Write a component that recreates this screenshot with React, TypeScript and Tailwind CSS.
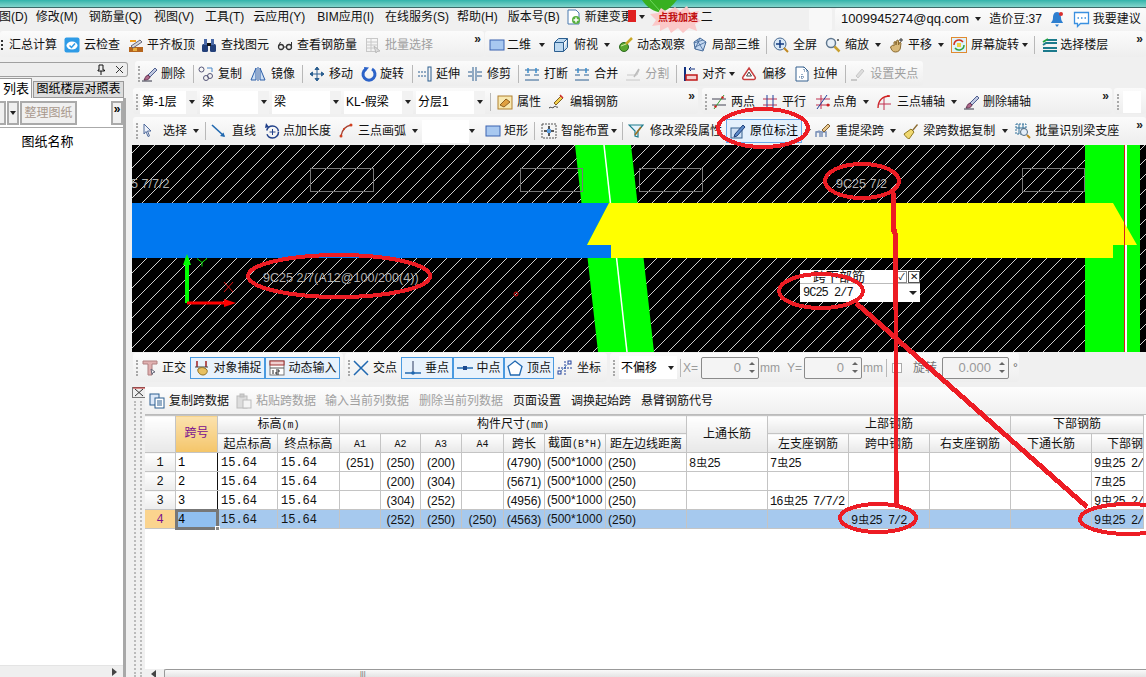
import React from "react";

const SANS = "[font-family:'Liberation_Sans','Noto_Sans_CJK_SC',sans-serif]";
const MONO = "[font-family:'Liberation_Mono','Noto_Sans_CJK_SC',monospace]";

const Ic = ({ children }: { children: React.ReactNode }) => (
  <svg width={16} height={16} viewBox="0 0 16 16" fill="none" className="shrink-0">{children}</svg>
);

const Icons: Record<string, React.ReactNode> = {
  cloud: <Ic><rect x="0.5" y="0.5" width="15" height="15" rx="2" fill="#2e9be6" /><ellipse cx="8" cy="8.5" rx="5.5" ry="4" fill="#fff" /><path d="M5.5 8.5l2 2 3.500-4" stroke="#2e9be6" strokeWidth="1.500" /></Ic>,
  level: <Ic><rect x="1" y="10" width="14" height="5" fill="#b5651d" /><rect x="5" y="11" width="4" height="3" fill="#e8b040" /><path d="M3 9l9-6 2 2-9 6z" fill="#d8d8d8" stroke="#667" /><path d="M2 4h6" stroke="#f0a020" strokeWidth="2" /></Ic>,
  binoc: <Ic><rect x="1" y="7" width="6" height="8" rx="1.500" fill="#23407a" /><rect x="9" y="7" width="6" height="8" rx="1.500" fill="#23407a" /><rect x="3" y="2" width="3" height="6" fill="#4a6aa8" /><rect x="10" y="2" width="3" height="6" fill="#4a6aa8" /><rect x="6" y="6" width="4" height="3" fill="#111" /></Ic>,
  glasses: <Ic><circle cx="4" cy="10" r="2.500" stroke="#333" strokeWidth="1.300" /><circle cx="12" cy="10" r="2.500" stroke="#333" strokeWidth="1.300" /><path d="M6.500 10h3M1.500 9l2-4M14.500 9V5" stroke="#333" /></Ic>,
  batch: <Ic><rect x="1.500" y="1.500" width="11" height="13" stroke="#c8c8c8" /><path d="M1.500 5h11M1.500 8h11M1.500 11h11M6 1.500v13" stroke="#c8c8c8" /><path d="M9 9l6 5-3 .5-1 1.500z" fill="#ddd" stroke="#bbb" /></Ic>,
  rect: <Ic><rect x="1" y="3" width="14" height="10" fill="#a8c8f0" stroke="#3a62b0" /></Ic>,
  cube: <Ic><path d="M1.500 5.500h9v9h-9zM1.500 5.500l4-4h9l-4 4M10.500 14.500l4-4v-9" fill="#bcd8f0" stroke="#2c5f90" /></Ic>,
  orbit: <Ic><circle cx="6" cy="10" r="4.500" fill="#5aa82e" stroke="#2c6a20" /><path d="M8 7l6-6" stroke="#c8a828" strokeWidth="2.500" /><path d="M3 9l5-2" stroke="#d4e8a0" /></Ic>,
  local3d: <Ic><path d="M2 5l6-4 6 4-3 9-8-2z" fill="#c4d8f0" stroke="#446a9a" /><path d="M5 3l6 10M8 1l-5 11M11 3l-9 3M14 5l-11 5" stroke="#446a9a" strokeWidth=".8" /></Ic>,
  full: <Ic><circle cx="7" cy="7" r="6" fill="#d8e8f6" stroke="#4a6a90" /><path d="M7 3v8M3 7h8" stroke="#123a80" strokeWidth="1.500" /><path d="M11 11l4 4" stroke="#c08820" strokeWidth="2" /></Ic>,
  zoom: <Ic><circle cx="6" cy="6" r="4.500" fill="#e8f0f8" stroke="#607890" strokeWidth="1.500" /><path d="M9.500 9.500l5 5" stroke="#c8a030" strokeWidth="2.500" /><circle cx="13" cy="3" r="1" fill="#444" /></Ic>,
  pan: <Ic><path d="M2 10c1-3 3-1 3-1V5l1.500-.5L7 8l1-5 1.500.5V8l1.500-3 1 1-.5 4c0 3-2 5-5 5-3 0-4-2-5-5z" fill="#d8b878" stroke="#8a6a30" /><path d="M12 1v4M10 3h4" stroke="#333" /></Ic>,
  rotate: <Ic><rect x="0.500" y="0.500" width="15" height="15" fill="#dff2fa" stroke="#e08a30" /><path d="M3 8a5 5 0 0 1 9-3" stroke="#d03020" strokeWidth="1.500" /><path d="M13 8a5 5 0 0 1-9 3" stroke="#30a040" strokeWidth="1.500" /><rect x="6" y="6" width="4" height="4" fill="#f0d040" /></Ic>,
  floors: <Ic><path d="M5 3h10M1 8l3-2h11M1 11h14M1 14h14" stroke="#1c7a8c" strokeWidth="2" /><path d="M1 5l5-3" stroke="#20a040" strokeWidth="2" /></Ic>,
  brush: <Ic><path d="M6 9l7-7 2 2-7 7z" fill="#c0c8e0" stroke="#506090" /><path d="M6 9l2 2c-1 3-4 3-6 3 1-1 1-4 4-5z" fill="#b06a8a" stroke="#603050" /><path d="M0 15h10" stroke="#334" /></Ic>,
  copy: <Ic><circle cx="3.500" cy="3.500" r="2.500" stroke="#557" /><circle cx="8" cy="12" r="2.500" stroke="#557" /><circle cx="12" cy="10" r="2.500" stroke="#557" /><path d="M9 2l5 0 0 4" stroke="#4a88c8" /></Ic>,
  mirror: <Ic><path d="M1 14L6 2v12zM15 14L10 2v12z" fill="#cfe0f4" stroke="#2c5ea8" /><path d="M8 1v14" stroke="#2c5ea8" /></Ic>,
  move: <Ic><path d="M8 1v14M1 8h14M8 1L6 3.500h4zM8 15l-2-2.500h4zM1 8l2.500-2v4zM15 8l-2.500-2v4z" stroke="#2c5f90" fill="#2c5f90" /></Ic>,
  spin: <Ic><path d="M11 3a6 6 0 1 1-6 0" stroke="#2b62c8" strokeWidth="3" /><path d="M3 1l5 .5L4 6z" fill="#2b62c8" /></Ic>,
  extend: <Ic><path d="M0 6h8M0 10h8" stroke="#2c5f90" strokeDasharray="2 1" /><rect x="10" y="1" width="3" height="14" stroke="#2c5f90" /></Ic>,
  trim: <Ic><path d="M1 6h4M1 10h4M10 6h5M10 10h5" stroke="#2c5f90" /><path d="M6 1v14M9 1v14" stroke="#2c5f90" /></Ic>,
  breakI: <Ic><path d="M1 4h14M1 14h14M1 9h5M10 9h5" stroke="#2c5f90" /><path d="M4 2v5M12 2v5" stroke="#3a8fd0" strokeWidth="1.500" /></Ic>,
  split: <Ic><path d="M1 14h14M2 9h10l2-5" stroke="#c8c8c8" /><path d="M9 11l5-8" stroke="#bbb" strokeWidth="1.500" /></Ic>,
  align: <Ic><path d="M2 1v14" stroke="#103080" strokeWidth="2" /><path d="M6 3h6M6 3l2-2M6 3l2 2" stroke="#103080" /><rect x="3" y="9" width="11" height="5" fill="#f4d0d0" stroke="#c01818" strokeWidth="1.500" /></Ic>,
  offset: <Ic><path d="M8 2l6 9a1.500 1.500 0 0 1-1 2.500H3A1.500 1.500 0 0 1 2 11z" stroke="#c84040" strokeWidth="1.500" fill="#fff" /><path d="M8 6l2.500 4h-5z" stroke="#444" /></Ic>,
  stretch: <Ic><path d="M2 1h8l4 4v10H2z" fill="#fff" stroke="#35608f" /><path d="M10 1v4h4M8 8v5M5 11h6" stroke="#35608f" strokeDasharray="1 1" /></Ic>,
  grip: <Ic><path d="M1 14h6" stroke="#c8c8c8" strokeWidth="2" /><path d="M6 10l6-7 2 2-6 7z" fill="#ddd" stroke="#c8c8c8" /></Ic>,
  prop: <Ic><rect x="1" y="2" width="14" height="13" fill="#f8e8b0" stroke="#b08030" /><path d="M3 11l6-6 4 3-6 5z" fill="#e0a040" stroke="#906020" /></Ic>,
  pencil: <Ic><path d="M5 9l7-7 2 2-7 7z" fill="#f2d050" stroke="#806020" /><path d="M0 14c2-2 3 1 5-1s2 1 4 0" stroke="#333" /><path d="M11 1l3 3" stroke="#d03030" strokeWidth="1.500" /></Ic>,
  twop: <Ic><path d="M1 5h14M1 11h14" stroke="#445" /><path d="M3 15L13 1" stroke="#30a030" /><circle cx="4.500" cy="12.500" r="1.200" fill="#d02020" /><circle cx="11.500" cy="3.500" r="1.200" fill="#d02020" /></Ic>,
  para: <Ic><path d="M1 5h14M1 11h14" stroke="#c03050" /><path d="M5 1v14M11 1v14" stroke="#20409a" /></Ic>,
  angle: <Ic><path d="M1 5h14M1 11h14M6 1v14" stroke="#c03050" /><path d="M2 15L12 1" stroke="#20409a" /><circle cx="13" cy="11" r="1.500" fill="#d02020" /></Ic>,
  arcAxis: <Ic><path d="M2 14C2 6 7 2 14 2" stroke="#d02020" strokeWidth="1.300" /><path d="M8 4v12M2 10h13" stroke="#c03050" /><circle cx="12" cy="2" r="1" fill="#d02020" /></Ic>,
  arrow: <Ic><path d="M4 1l7 7H7.500l2 5-1.500.5-2-5L4 11z" fill="#eef2fa" stroke="#506a9a" /></Ic>,
  line: <Ic><path d="M1 2l12 11" stroke="#2068b0" strokeWidth="1.600" /><path d="M14 14l-5-1 3.500-3.500z" fill="#2068b0" /></Ic>,
  ptLen: <Ic><circle cx="8.500" cy="9" r="6" stroke="#20408a" strokeWidth="1.500" strokeDasharray="16 4" /><path d="M8.500 6v6M5.500 9h6" stroke="#20408a" /><path d="M2 0l3 4-4 1z" fill="#20408a" /></Ic>,
  arc: <Ic><path d="M3 13C4 7 8 3 13 2" stroke="#a84030" strokeWidth="1.300" /><circle cx="3" cy="13" r="1.500" fill="#d04020" /><circle cx="13" cy="2" r="1.500" fill="#d04020" /><circle cx="6" cy="6" r="1" fill="#d04020" /></Ic>,
  smart: <Ic><rect x="1" y="1" width="14" height="14" fill="#f4f4f4" stroke="#555" strokeDasharray="2 1" /><path d="M8 3v10M3 8h10" stroke="#222" strokeWidth="1.500" /><rect x="6" y="6" width="4" height="4" fill="#60a0e0" /></Ic>,
  funnel: <Ic><path d="M1 2h14l-5 6v6l-3-1V8z" fill="#e6f2fb" stroke="#1c7a8c" strokeWidth="1.200" /><path d="M7 12l6-8" stroke="#a07020" strokeWidth="1.500" /></Ic>,
  yuan: <Ic><rect x="1" y="5" width="11" height="10" fill="#cfe0f4" stroke="#35608f" /><path d="M5 11l8-9 2 2-8 9-3 1z" fill="#5a88c8" stroke="#20407a" /></Ic>,
  respan: <Ic><path d="M1 14v-5h4v5M7 14v-5h4v5" stroke="#7a90b8" strokeWidth="1.500" /><path d="M7 7l6-6 2 2-6 6z" fill="#e8c890" stroke="#806030" /><path d="M1 9a5 5 0 0 1 6 0" stroke="#7a90b8" /></Ic>,
  broom: <Ic><path d="M9 7l5-6 1 1-5 6z" fill="#8a6a30" /><path d="M1 11l7-5 3 3-5 7c-2-1-4-3-5-5z" fill="#f0d870" stroke="#907820" /></Ic>,
  batchBeam: <Ic><rect x="1" y="1" width="10" height="10" stroke="#30709a" strokeDasharray="2 1" /><path d="M4 1v10M8 1v10M1 5h10" stroke="#30709a" /><circle cx="9" cy="9" r="3.500" fill="#e4eef8" stroke="#506a80" /><path d="M12 12l3 3" stroke="#c08820" strokeWidth="2" /></Ic>,
  ortho: <Ic><path d="M1 1h14v3h-5v11H6V4H1z" fill="#e0b0b0" stroke="#b08080" /><path d="M9 9l4 3-2 .5-1 2z" fill="#fff" stroke="#667" /></Ic>,
  snap: <Ic><path d="M3 1v6M12 1v6" stroke="#a02020" strokeWidth="1.500" /><path d="M1 7h13" stroke="#444" /><path d="M4 9c2-2 7-2 9 1 1 2-1 5-4 5-3 0-6-3-5-6z" fill="#e8c060" stroke="#907020" /></Ic>,
  dyn: <Ic><rect x="1" y="1" width="14" height="14" fill="#fff" stroke="#777" /><rect x="1" y="1" width="14" height="4" fill="#f0d0d0" stroke="#a03030" /><path d="M1 8h14" stroke="#555" /><path d="M4 10v4M7 10h3v2H7v2h3" stroke="#222" /></Ic>,
  cross: <Ic><path d="M1 1l14 14M15 1L1 15" stroke="#2068b0" strokeWidth="1.500" /></Ic>,
  perp: <Ic><path d="M0 13h16" stroke="#2068b0" strokeWidth="1.500" /><path d="M8 1v12" stroke="#2c3a60" /><circle cx="8" cy="13" r="1.800" fill="#2068b0" /></Ic>,
  mid: <Ic><path d="M0 8h16" stroke="#2068b0" strokeWidth="1.500" /><rect x="6" y="6" width="4" height="4" fill="#1c4a90" /></Ic>,
  vertex: <Ic><path d="M8 1l7 5.500L12.500 15h-9L1 6.500z" fill="#fff" stroke="#2068b0" strokeWidth="1.300" /></Ic>,
  coord: <Ic><path d="M8 1v14M1 8h14" stroke="#20409a" strokeDasharray="2 1" /><path d="M1 14L14 1" stroke="#2068b0" strokeDasharray="1 1" /><rect x="11" y="1" width="3" height="3" fill="#fff" stroke="#20409a" /><rect x="1" y="11" width="3" height="3" fill="#fff" stroke="#20409a" /></Ic>,
  copySpan: <Ic><rect x="1" y="1" width="9" height="11" fill="#dce8f8" stroke="#2c5f90" /><rect x="6" y="5" width="9" height="10" fill="#fff" stroke="#2c5f90" /><path d="M8 8h5M8 10h5M8 12h5" stroke="#2c5f90" /></Ic>,
  paste: <Ic><rect x="1" y="3" width="10" height="12" fill="#ddd" stroke="#bbb" /><rect x="4" y="1" width="4" height="3" fill="#ccc" stroke="#bbb" /><rect x="7" y="7" width="8" height="8" fill="#f4f4f4" stroke="#bbb" /></Ic>,
  doc: <Ic><path d="M2 1h8l3 3v11H2z" fill="#fff" stroke="#4a7ab0" /><circle cx="10" cy="11" r="4" fill="#58b040" /><path d="M10 8.500v5M7.500 11h5" stroke="#fff" strokeWidth="1.500" /></Ic>,
};

const Caret = ({ m = "ml-[6px]", gray = false }: { m?: string; gray?: boolean }) => (
  <span className={`${m} w-0 h-0 shrink-0 border-x-[3px] border-x-transparent border-t-[4px] ${gray ? "border-t-[#999]" : "border-t-[#222]"}`} />
);
const Sep = ({ m = "ml-[6px]" }: { m?: string }) => <span className={`${m} w-px h-[18px] shrink-0 bg-[#b8b8b8]`} />;
const Grip = ({ m = "ml-[3px]" }: { m?: string }) => <span className={`${m} h-[16px] shrink-0 border-l-2 border-dotted border-[#a8a8a8]`} />;
const More = () => <span className="ml-auto mr-[3px] self-start text-[12px] leading-[12px] font-bold text-[#222]">»</span>;

function Item({ icon, text, m = "ml-[8px]", gray = false, gap = "gap-[4px]" }: { icon?: string; text: string; m?: string; gray?: boolean; gap?: string }) {
  return (
    <span className={`${m} ${gap} flex items-center shrink-0 whitespace-nowrap ${gray ? "text-[#a0a0a0]" : "text-[#111]"}`}>
      {icon && Icons[icon]}
      <span>{text}</span>
    </span>
  );
}

function Sel({ text, w = "w-[57px]", m = "ml-[3px]" }: { text: string; w?: string; m?: string }) {
  return (
    <span className={`${m} ${w} h-[23px] bg-white flex items-center shrink-0 pl-[2px] overflow-hidden`}>
      <span className="flex-1 whitespace-nowrap">{text}</span>
      <span className="w-[11px] h-full bg-[#f2f2f2] flex items-center justify-center"><Caret m="" /></span>
    </span>
  );
}

const panel = "h-full flex items-center rounded-[3px] bg-gradient-to-b from-[#fbfbfb] to-[#eeeeee]";

const Hot = ({ icon, text, w, m = "ml-[1px]" }: { icon: string; text: string; w: string; m?: string }) => (
  <span className={`${m} ${w} h-[22px] shrink-0 flex items-center justify-center gap-[4px] border border-[#4a9ae0] bg-[#e8f2fc] text-[#111] whitespace-nowrap`}>
    {Icons[icon]}<span>{text}</span>
  </span>
);

const Spin = ({ v, w = "w-[58px]", m = "ml-[3px]" }: { v: string; w?: string; m?: string }) => (
  <span className={`${m} ${w} h-[22px] shrink-0 flex items-center justify-end border border-[#8a8a8a] rounded-[2px] bg-[#f4f4f4] text-[#999] text-[13px] pr-[2px]`}>
    <span className="mr-[6px]">{v}</span>
    <span className="flex flex-col gap-[5px] w-[9px] items-center">
      <span className="w-0 h-0 border-x-[3px] border-x-transparent border-b-[3px] border-b-[#666]" />
      <span className="w-0 h-0 border-x-[3px] border-x-transparent border-t-[3px] border-t-[#666]" />
    </span>
  </span>
);

const menus = [
  ["图(D)", "-ml-[1px]"], ["修改(M)", "ml-[8px]"], ["钢筋量(Q)", "ml-[11px]"], ["视图(V)", "ml-[12px]"], ["工具(T)", "ml-[11px]"],
  ["云应用(Y)", "ml-[9px]"], ["BIM应用(I)", "ml-[12px]"], ["在线服务(S)", "ml-[11px]"], ["帮助(H)", "ml-[8px]"], ["版本号(B)", "ml-[10px]"],
];

const cw = ["w-[31px]", "w-[42px]", "w-[60px]", "w-[62px]", "w-[41px]", "w-[40px]", "w-[41px]", "w-[42px]", "w-[41px]", "w-[61px]", "w-[81px]", "w-[81px]", "w-[81px]", "w-[81px]", "w-[81px]", "w-[81px]", "w-[52px]"];

const rows = [
  ["1", "15.64", "15.64", "(251)", "(250)", "(200)", "", "(4790)", "(500*1000)", "(250)", "8虫25", "7虫25", "", "", "", "9虫25 2/7"],
  ["2", "15.64", "15.64", "", "(200)", "(304)", "", "(5671)", "(500*1000)", "(250)", "", "", "", "", "", "7虫25"],
  ["3", "15.64", "15.64", "", "(304)", "(252)", "", "(4956)", "(500*1000)", "(250)", "", "16虫25 7/7/2", "", "", "", "9虫25 2/7"],
  ["4", "15.64", "15.64", "", "(252)", "(250)", "(250)", "(4563)", "(500*1000)", "(250)", "", "", "9虫25 7/2", "", "", "9虫25 2/7"],
];

const Rebar = ({ s }: { s: string }) => {
  const [a, b] = s.split("虫");
  return <span className={`${MONO} tracking-[-1px]`}>{a}<span className="mx-[1px] text-[11px]">虫</span>{b}</span>;
};

const hd = "border border-[#c4c4c4] bg-gradient-to-b from-[#ffffff] to-[#e8e8e8] text-center font-normal text-[#111] p-0 leading-[15px] overflow-hidden whitespace-nowrap";
const hd2 = `${hd} pt-[2px]`;
const small = `${MONO} text-[10px]`;

function Table() {
  return (
    <table className="-ml-[1px] w-[999px] table-fixed border-collapse text-[12px] bg-white">
      <colgroup>{cw.map((c, i) => <col key={i} className={c} />)}</colgroup>
      <thead>
        <tr className="h-[18px]">
          <th rowSpan={2} className={hd} />
          <th rowSpan={2} className="border border-[#c4c4c4] bg-gradient-to-b from-[#fbe2ae] to-[#f4c568] text-[#7a1090] font-normal p-0 pb-[2px]">跨号</th>
          <th colSpan={2} className={hd}>标高<span className={small}>(m)</span></th>
          <th colSpan={7} className={hd}>构件尺寸<span className={small}>(mm)</span></th>
          <th rowSpan={2} className={hd}>上通长筋</th>
          <th colSpan={3} className={hd}>上部钢筋</th>
          <th colSpan={2} className={hd}>下部钢筋</th>
        </tr>
        <tr className="h-[19px]">
          <th className={hd2}>起点标高</th>
          <th className={hd2}>终点标高</th>
          {["A1", "A2", "A3", "A4"].map((a) => <th key={a} className={`${hd2} ${small}`}>{a}</th>)}
          <th className={hd2}>跨长</th>
          <th className={hd2}>截面<span className={small}>(B*H)</span></th>
          <th className={hd2}>距左边线距离</th>
          <th className={hd2}>左支座钢筋</th>
          <th className={hd2}>跨中钢筋</th>
          <th className={hd2}>右支座钢筋</th>
          <th className={hd2}>下通长筋</th>
          <th className={`${hd2} text-left pl-[15px]`}>下部钢筋</th>
        </tr>
      </thead>
      <tbody>
        {rows.map((r, i) => {
          const sel = i === 3;
          const td = `border border-[#c4c4c4] px-[2px] pt-[3px] pb-0 h-[19px] leading-[13px] overflow-hidden whitespace-nowrap text-[#111] ${sel ? "bg-[#a6c9ee]" : "bg-white"}`;
          return (
            <tr key={i} className="h-[19px]">
              <td className={`border border-[#c4c4c4] p-0 pt-[3px] text-center leading-[13px] ${MONO} ${sel ? "bg-[#fbd48e] text-[#7a1090]" : "bg-gradient-to-b from-[#ffffff] to-[#ececec] text-[#111]"}`}>{i + 1}</td>
              <td className={`${MONO} p-0 pl-[2px] pt-[3px] leading-[13px] ${sel ? "relative bg-[#90bff0] outline-[3px] -outline-offset-2 outline-[#777777] border border-[#777]" : "border border-[#c4c4c4] border-r-[#111] bg-white"}`}>
                {r[0]}
                {sel && <span className="absolute -right-[3px] -bottom-[3px] w-[5px] h-[5px] bg-[#888] border border-white" />}
              </td>
              <td className={`${td} ${MONO} pl-[3px]`}>{r[1]}</td>
              <td className={`${td} ${MONO} pl-[3px]`}>{r[2]}</td>
              {r.slice(3, 8).map((c, j) => <td key={j} className={`${td} ${j < 4 ? "text-center" : "text-center px-0"}`}>{c}</td>)}
              <td className={`${td} pt-[1px] pb-[2px]`}>{r[8].replace(")", "")}</td>
              <td className={td}>{r[9]}</td>
              {r.slice(10, 15).map((c, j) => <td key={j} className={td}>{c && <Rebar s={c} />}</td>)}
              <td className={td}><Rebar s={r[15]} /></td>
            </tr>
          );
        })}
      </tbody>
    </table>
  );
}

function Canvas() {
  const gray = "#b0b0b0";
  return (
    <div className="relative h-[207px] bg-black overflow-hidden">
      <svg width={1014} height={207} viewBox="132 145 1014 207" className="block">
        <defs>
          <pattern id="hatch" width="15" height="15" patternUnits="userSpaceOnUse">
            <path d="M0 15L15 0" stroke="#d0d0d0" strokeWidth="1" />
          </pattern>
        </defs>
        <rect x="132" y="145" width="1014" height="207" fill="url(#hatch)" />
        <polygon points="575,145 631,145 654,352 598,352" fill="#00ff00" />
        <path d="M604 145L627 352" stroke="#fff" strokeWidth="1.500" />
        <rect x="1085" y="145" width="55" height="207" fill="#00ff00" />
        <rect x="1124" y="145" width="1" height="207" fill="#d02020" />
        <rect x="1125" y="145" width="2" height="207" fill="#fff" />
        {[[310, 63], [520, 62], [639, 63], [1022, 62]].map(([x, w]) => (
          <rect key={x} x={x + 0.5} y="168.500" width={w} height="23" fill="none" stroke="#777" />
        ))}
        <polygon points="132,203 609,203 587,245 611,245 611,258 132,258" fill="#0078f0" />
        <polygon points="609,203 1113,203 1137,245 1113,245 1113,258 611,258 611,245 587,245" fill="#ffff00" />
        <rect x="1124" y="203" width="1" height="42" fill="#d02020" />
        <text x="131" y="188" fontSize="12.600" fill={gray} fontFamily="Liberation Sans">5 7/7/2</text>
        <text x="836" y="188" fontSize="12.600" fill={gray} fontFamily="Liberation Sans">9C25 7/2</text>
        <text x="263" y="282" fontSize="12.600" fill={gray} fontFamily="Liberation Sans">9C25 2/7(A12@100/200(4))</text>
        <path d="M187 303V258" stroke="#00ff00" strokeWidth="4" />
        <polygon points="187,254 183,265 191,265" fill="#00ff00" />
        <path d="M187 303H228" stroke="#ff0000" strokeWidth="3" />
        <polygon points="236,303 224,299 224,307" fill="#ff0000" />
        <path d="M197 258.500l5 4 5-4M202 262.500v4" stroke="#00e000" />
        <path d="M224 282l9 10M233 282l-9 10" stroke="#e01010" />
        <circle cx="516" cy="294" r="2" fill="none" stroke="#e01010" />
      </svg>
      <div className="absolute left-[668px] top-[125px] w-[120px] h-[32px] bg-white text-[#111]">
        <div className="h-[14px] flex items-center border-b border-[#bbb]">
          <span className="ml-[13px] flex-1 text-[13px] leading-[14px] whitespace-nowrap">跨下部筋</span>
          <span className="w-[11px] h-[12px] border border-[#888] text-[9px] leading-[10px] text-center">✓</span>
          <span className="ml-[1px] w-[12px] h-[12px] border border-[#555] text-[10px] leading-[10px] text-center">✕</span>
        </div>
        <div className="h-[18px] flex items-center pl-[3px]">
          <span className={`${MONO} flex-1 text-[12px] tracking-[-1px] whitespace-pre`}>9C25 2/7</span>
          <span className="mr-[3px] w-0 h-0 border-x-[4px] border-x-transparent border-t-[4px] border-t-[#222]" />
        </div>
      </div>
    </div>
  );
}

export default function App() {
  return (
    <div className={`relative w-[1146px] h-[677px] overflow-hidden bg-[#f0f0f0] text-[12px] ${SANS} flex flex-col`}>
      {/* title strip */}
      <div className="h-[8px] shrink-0 bg-gradient-to-b from-[#2fb3aa] to-[#7fd6cc] border-b border-[#3a6a68]" />
      {/* menu */}
      <div className="h-[23px] shrink-0 flex items-center pb-[6px] text-[#111] relative">
        {menus.map(([t, m]) => <span key={t} className={`${m} whitespace-nowrap`}>{t}</span>)}
        <span className="ml-[6px] flex items-center gap-[3px]">{Icons.doc}<span>新建变更</span></span>
        <Caret m="ml-[6px]" />
        <span className="ml-[56px]">二</span>
        <div className="ml-auto flex items-center h-[23px] mt-[6px]">
          <span className="w-[23px] h-full bg-[#f8f8f8] rounded-[3px]" />
          <span className="ml-[3px] w-[311px] h-full bg-gradient-to-b from-[#fbfbfb] to-[#f2f2f2] rounded-[3px] flex items-center pl-[6px] pb-[1px] whitespace-nowrap">
            <span className="text-[13px]">1009945274@qq.com</span>
            <Caret m="ml-[6px]" />
            <span className="ml-[8px] text-[12px]">造价豆:37</span>
            <svg width={14} height={17} viewBox="0 0 14 17" className="ml-[8px]"><path d="M7 1c-3 0-4 3-4 6 0 3-2 4-2 5h12c0-1-2-2-2-5 0-3-1-6-4-6z" fill="#2e7fd0" /><path d="M5 13.500h4L7 16z" fill="#2e7fd0" /><circle cx="11" cy="3" r="2" fill="#d83030" /></svg>
            <svg width={17} height={17} viewBox="0 0 17 17" className="ml-[9px]"><path d="M1.500 1.500h14v11h-8l-3 3v-3h-3z" fill="#fff" stroke="#3a90e0" strokeWidth="1.300" /><path d="M4.500 7h1.500M8 7h1.500M11.500 7H13" stroke="#3a90e0" strokeWidth="1.300" /></svg>
            <span className="ml-[3px]">我要建议</span>
          </span>
        </div>
      </div>
      {/* toolbar 1 */}
      <div className="h-[26px] shrink-0 flex">
        <div className={`${panel} w-[484px] pt-[2px]`}>
          <span className="ml-[1px] w-[3px] h-[10px] border-l-2 border-dotted border-[#333]" />
          <Item text="汇总计算" m="ml-[5px]" />
          <Item icon="cloud" text="云检查" m="ml-[7px]" />
          <Item icon="level" text="平齐板顶" m="ml-[8px]" gap="gap-[3px]" />
          <Item icon="binoc" text="查找图元" m="ml-[6px]" />
          <Item icon="glasses" text="查看钢筋量" m="ml-[8px]" />
          <Item icon="batch" text="批量选择" m="ml-[8px]" gray />
          <More />
        </div>
        <div className={`${panel} ml-[1px] w-[661px] pt-[2px]`}>
          <Item icon="rect" text="二维" m="ml-[4px]" gap="gap-[2px]" />
          <Caret m="ml-[8px]" />
          <Item icon="cube" text="俯视" m="ml-[8px]" gap="gap-[5px]" />
          <Caret />
          <Item icon="orbit" text="动态观察" m="ml-[8px]" gap="gap-[3px]" />
          <Item icon="local3d" text="局部三维" m="ml-[7px]" />
          <Sep />
          <Item icon="full" text="全屏" m="ml-[6px]" />
          <Item icon="zoom" text="缩放" m="ml-[8px]" />
          <Caret />
          <Item icon="pan" text="平移" m="ml-[8px]" gap="gap-[3px]" />
          <Caret />
          <Item icon="rotate" text="屏幕旋转" m="ml-[7px]" />
          <Caret m="ml-[3px]" />
          <Sep m="ml-[6px]" />
          <Item icon="floors" text="选择楼层" m="ml-[7px]" gap="gap-[2px]" />
          <More />
        </div>
      </div>
      {/* main area */}
      <div className="mt-[4px] flex-1 min-h-0 flex">
        {/* left panel */}
        <div className="w-[128px] shrink-0 flex flex-col">
          <div className="h-[15px] mt-[1px] shrink-0 flex items-center justify-end bg-[#eeeeee] border border-l-0 border-[#a0a0a0] rounded-r-[3px] pr-[3px]">
            <svg width={10} height={11} viewBox="0 0 10 11" className="mr-[9px]"><path d="M3 1h4v5h1.500v1h-6.500v-1H3zM5 7v4" stroke="#111" fill="none" /></svg>
            <svg width={9} height={9} viewBox="0 0 9 9"><path d="M1 1l7 7M8 1L1 8" stroke="#333" /></svg>
          </div>
          <div className="h-[21px] shrink-0 flex items-end">
            <span className="w-[32px] h-[20px] bg-white border border-l-0 border-b-0 border-[#999] text-[13px] leading-[19px] text-right pr-[2px]">列表</span>
            <span className="ml-[1px] w-[91px] h-[17px] bg-[#dddddd] border border-[#999] text-center leading-[15px] whitespace-nowrap">图纸楼层对照表</span>
          </div>
          <div className="flex-1 min-h-0 w-[126px] flex flex-col bg-white border-r-[3px] border-[#a8a8a8]">
            <div className="h-[30px] shrink-0 flex items-center bg-white border-b border-[#aaa]">
              <span className="w-[6px] h-[24px] bg-[#f0f0f0] border-r-2 border-y-2 border-[#aaa] overflow-hidden leading-[20px] text-[11px]" />
              <span className="ml-[1px] w-[12px] h-[24px] bg-[#f0f0f0] border-2 border-[#aaa] flex items-center justify-center"><Caret m="" /></span>
              <span className="ml-[1px] w-[58px] h-[24px] bg-[#f0f0f0] border-2 border-[#aaa] text-[#a8988c] text-center leading-[20px] whitespace-nowrap">整理图纸</span>
              <span className="ml-[34px] w-[12px] h-[24px] bg-[#f0f0f0] border-2 border-[#aaa] font-bold leading-[12px] text-center">»</span>
            </div>
            <div className="h-[27px] shrink-0 flex items-center justify-center pr-[28px] bg-white text-[13px]">图纸名称</div>
            <div className="flex-1" />
            <div className="h-[12px] shrink-0 bg-[#efefef] flex items-center justify-end pr-[6px] border-t border-[#e4e4e4]">
              <span className="w-0 h-0 border-y-[4px] border-y-transparent border-l-[5px] border-l-[#444]" />
            </div>
          </div>
        </div>
        {/* right column */}
        <div className="ml-[4px] w-[1014px] shrink-0 flex flex-col">
          <div className="h-[25px] shrink-0 pl-[3px] pr-[223px]">
            <div className={panel}>
              <Grip />
              <Item icon="brush" text="删除" m="ml-[2px]" gap="gap-[3px]" />
              <Sep m="ml-[8px]" />
              <Item icon="copy" text="复制" m="ml-[4px]" />
              <Item icon="mirror" text="镜像" m="ml-[8px]" gap="gap-[5px]" />
              <Sep m="ml-[7px]" />
              <Item icon="move" text="移动" m="ml-[6px]" />
              <Item icon="spin" text="旋转" m="ml-[8px]" gap="gap-[3px]" />
              <Sep m="ml-[8px]" />
              <Item icon="extend" text="延伸" m="ml-[5px]" gap="gap-[2px]" />
              <Item icon="trim" text="修剪" m="ml-[7px]" />
              <Sep m="ml-[7px]" />
              <Item icon="breakI" text="打断" m="ml-[5px]" />
              <Item icon="breakI" text="合并" m="ml-[6px]" />
              <Item icon="split" text="分割" m="ml-[7px]" gray />
              <Sep m="ml-[7px]" />
              <Item icon="align" text="对齐" m="ml-[6px]" gap="gap-[3px]" />
              <Caret m="ml-[3px]" />
              <Item icon="offset" text="偏移" m="ml-[6px]" gap="gap-[5px]" />
              <Item icon="stretch" text="拉伸" m="ml-[8px]" gap="gap-[3px]" />
              <Sep m="ml-[8px]" />
              <Item icon="grip" text="设置夹点" m="ml-[4px]" gray />
            </div>
          </div>
          <div className="mt-[2px] h-[26px] shrink-0 flex pl-[1px]">
            <div className={`${panel} w-[565px] pt-[2px]`}>
              <Grip m="ml-[3px]" />
              <Sel text="第-1层" m="ml-[2px]" />
              <Sel text="梁" w="w-[69px]" />
              <Sel text="梁" w="w-[69px]" />
              <Sel text="KL-假梁" w="w-[69px]" />
              <Sel text="分层1" w="w-[69px]" />
              <Sep m="ml-[5px]" />
              <Item icon="prop" text="属性" m="ml-[6px]" />
              <Item icon="pencil" text="编辑钢筋" m="ml-[8px]" gap="gap-[5px]" />
              <More />
            </div>
            <div className={`${panel} ml-[4px] w-[410px] pt-[2px]`}>
              <Grip />
              <Item icon="twop" text="两点" m="ml-[4px]" />
              <Item icon="para" text="平行" m="ml-[7px]" />
              <Item icon="angle" text="点角" m="ml-[9px]" gap="gap-[2px]" />
              <Caret />
              <Item icon="arcAxis" text="三点辅轴" m="ml-[7px]" gap="gap-[5px]" />
              <Caret />
              <Item icon="brush" text="删除辅轴" m="ml-[7px]" gap="gap-[3px]" />
              <More />
            </div>
            <div className={`${panel} ml-[2px] flex-1 pt-[2px]`}>
              <Grip />
              <span className="ml-[4px] w-[18px] h-[22px] bg-white" />
            </div>
          </div>
          <div className="mt-[3px] h-[26px] shrink-0 pl-[1px]">
            <div className={`${panel} pt-[2px]`}>
              <Grip m="ml-[3px]" />
              <Item icon="arrow" text="选择" m="ml-[2px]" gap="gap-[7px]" />
              <Caret />
              <Sep m="ml-[6px]" />
              <Item icon="line" text="直线" m="ml-[5px]" gap="gap-[5px]" />
              <Item icon="ptLen" text="点加长度" m="ml-[8px]" gap="gap-[3px]" />
              <Item icon="arc" text="三点画弧" m="ml-[7px]" gap="gap-[4px]" />
              <Caret />
              <span className="ml-[4px] w-[47px] h-[23px] bg-white shrink-0" />
              <Caret m="ml-[0px]" />
              <Item icon="rect" text="矩形" m="ml-[10px]" gap="gap-[3px]" />
              <Sep />
              <Item icon="smart" text="智能布置" m="ml-[6px]" gap="gap-[4px]" />
              <Caret m="ml-[2px]" />
              <Sep m="ml-[5px]" />
              <Item icon="funnel" text="修改梁段属性" m="ml-[5px]" gap="gap-[6px]" />
              <span className="ml-[4px] w-[76px] h-[24px] shrink-0 flex items-center justify-center gap-[4px] border border-[#6aa8e8] bg-[#e4f0fc] whitespace-nowrap">{Icons.yuan}<span>原位标注</span></span>
              <Caret m="ml-[3px]" />
              <Item icon="respan" text="重提梁跨" m="ml-[4px]" gap="gap-[5px]" />
              <Caret />
              <Item icon="broom" text="梁跨数据复制" m="ml-[7px]" />
              <Caret m="ml-[7px]" />
              <Item icon="batchBeam" text="批量识别梁支座" m="ml-[7px]" gap="gap-[4px]" />
              <More />
            </div>
          </div>
          <div className="mt-[2px] shrink-0"><Canvas /></div>
          {/* status toolbar */}
          <div className="mt-[1px] h-[29px] shrink-0 flex pl-[1px]">
            <div className={`${panel} w-[210px]`}>
              <Grip />
              <Item icon="ortho" text="正交" m="ml-[4px]" gap="gap-[4px]" />
              <Hot icon="snap" text="对象捕捉" w="w-[75px]" m="ml-[4px]" />
              <Hot icon="dyn" text="动态输入" w="w-[75px]" m="ml-0" />
            </div>
            <div className={`${panel} ml-[2px] w-[262px]`}>
              <Grip />
              <Item icon="cross" text="交点" m="ml-[3px]" />
              <Hot icon="perp" text="垂点" w="w-[52px]" m="ml-[4px]" />
              <Hot icon="mid" text="中点" w="w-[51px]" m="ml-0" />
              <Hot icon="vertex" text="顶点" w="w-[50px]" m="ml-0" />
              <Item icon="coord" text="坐标" m="ml-[3px]" />
            </div>
            <div className={`${panel} ml-[3px] w-[409px]`}>
              <Grip />
              <span className="ml-[4px] w-[58px] h-[23px] bg-white flex items-center pl-[2px] shrink-0"><span className="flex-1">不偏移</span><Caret m="mr-[3px]" /></span>
              <Sep m="ml-[3px]" />
              <span className="ml-[2px] text-[#9a9a9a] whitespace-nowrap">X=</span>
              <Spin v="0" />
              <span className="ml-[1px] text-[#9a9a9a]">mm</span>
              <span className="ml-[7px] text-[#9a9a9a] whitespace-nowrap">Y=</span>
              <Spin v="0" m="ml-[2px]" />
              <span className="ml-[1px] text-[#9a9a9a]">mm</span>
              <Sep m="ml-[3px]" />
              <span className="ml-[5px] w-[10px] h-[10px] border border-[#aaa] bg-white shrink-0" />
              <span className="ml-[11px] text-[#777] whitespace-nowrap">旋转</span>
              <Spin v="0.000" w="w-[67px]" m="ml-[5px]" />
              <span className="ml-[4px] text-[#666]">°</span>
            </div>
          </div>
          {/* bottom panel */}
          <div className="mt-[5px] flex-1 min-h-0 flex">
            <div className="w-[13px] shrink-0 flex flex-col items-center">
              <svg width={14} height={11} viewBox="0 0 14 11" className="shrink-0"><rect x="0.500" y="0.500" width="13" height="10" fill="#eee" stroke="#777" /><path d="M3 2l8 7M11 2l-8 7" stroke="#333" /><path d="M1 1h12" stroke="#c02020" /></svg>
              <div className="mt-[3px] flex-1 w-[8px] ml-[-2px] border-x-2 border-dotted border-[#bbb]" />
            </div>
            <div className="flex-1 min-w-0 flex flex-col bg-white">
              <div className="h-[28px] shrink-0 flex items-center bg-gradient-to-b from-[#fdfdfd] to-[#f0f0f0] border-b border-[#bbb] whitespace-nowrap">
                <Item icon="copySpan" text="复制跨数据" m="ml-[4px]" />
                <Item icon="paste" text="粘贴跨数据" m="ml-[7px]" gray />
                <Item text="输入当前列数据" m="ml-[9px]" gray />
                <Item text="删除当前列数据" m="ml-[10px]" gray />
                <Item text="页面设置" m="ml-[10px]" />
                <Item text="调换起始跨" m="ml-[10px]" />
                <Item text="悬臂钢筋代号" m="ml-[10px]" />
              </div>
              <div className="flex-1 min-h-0 overflow-hidden"><Table /></div>
              <div className="h-[8px] shrink-0 flex bg-[#f0f0f0]">
                <span className="w-[19px] relative"><span className="absolute left-[6px] top-[1px] w-0 h-0 border-y-[4px] border-y-transparent border-r-[5px] border-r-[#444]" /></span>
                <span className="flex-1 border-t border-l border-[#999] bg-gradient-to-b from-[#fafafa] to-[#e4e4e4] rounded-tl-[2px] pl-[195px] text-[7px] leading-[7px] text-[#555]">|||</span>
              </div>
            </div>
          </div>
        </div>
      </div>

      {/* floating promo badge */}
      <svg width={90} height={36} viewBox="640 0 90 36" className="absolute left-[640px] top-0">
        <path d="M642 0c5 8 14 13 20 12 6-2 11-7 15-12z" fill="#38b020" />
        <path d="M650 0l10 11" stroke="#70d860" />
        <polygon points="650,14 658,13 661,8 667,12 675,7 680,11 687,6 690,12 699,11 696,17 701,21 695,24 697,31 689,28 683,33 678,28 671,33 668,27 660,31 660,25 652,26 656,20" fill="#fbc8c8" />
      </svg>
      <span className="absolute left-[658px] top-[12px] text-[10px] leading-[12px] font-bold text-[#c01010] whitespace-nowrap">点我加速</span>
      <span className="absolute left-[628px] top-[10px] w-[8px] h-[12px] bg-[#e02020]" />

      {/* hand-drawn red annotations */}
      <svg width={1146} height={677} viewBox="0 0 1146 677" className="absolute inset-0 pointer-events-none" fill="none" stroke="#ed1c24" strokeWidth="4" shapeRendering="crispEdges">
        <ellipse cx="763" cy="128" rx="45" ry="19" />
        <ellipse cx="862" cy="181" rx="37" ry="17" />
        <ellipse cx="339" cy="276" rx="91" ry="21" />
        <ellipse cx="821" cy="291" rx="42" ry="17" />
        <ellipse cx="878" cy="518" rx="38" ry="14" />
        <ellipse cx="1128" cy="519" rx="48" ry="15" />
        <path d="M893 192L894 231L895 231L896 310L896 470L897 507" strokeWidth="5" />
        <path d="M856 303L1087 507" strokeWidth="5" />
      </svg>
    </div>
  );
}
